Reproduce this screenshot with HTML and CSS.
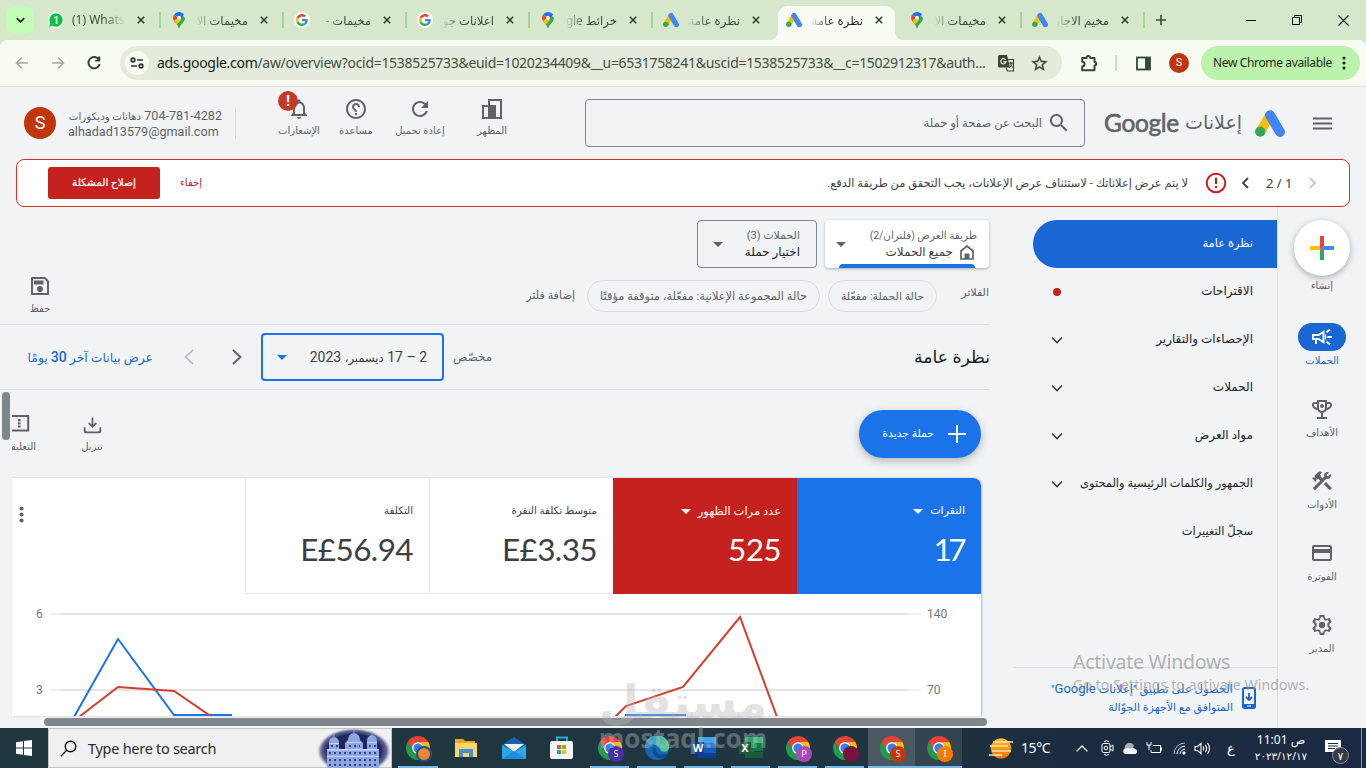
FILE: index.html
```html
<!DOCTYPE html>
<html lang="ar">
<head>
<meta charset="utf-8">
<title>نظرة عامة</title>
<link rel="stylesheet" href="styles.css">
</head>
<body>
<svg class="defs" width="0" height="0">
  <symbol id="chrome" viewBox="0 0 24 24">
    <path fill="#ea4335" d="M1.61 6A12 12 0 0 1 22.39 6H12A6 6 0 0 0 6.8 15Z"/>
    <path fill="#fbbc04" d="M12 6H22.39A12 12 0 0 1 12 24L17.2 15A6 6 0 0 0 12 6Z"/>
    <path fill="#1e9e4a" d="M1.61 6A12 12 0 0 0 12 24L17.2 15A6 6 0 0 1 6.8 15Z"/>
    <circle cx="12" cy="12" r="6" fill="#fff"/><circle cx="12" cy="12" r="4.6" fill="#3b7ded"/>
  </symbol>
  <symbol id="pin" viewBox="0 0 12 16">
    <path fill="#34a853" d="M1 9C2.500 11 5 13 5.500 16H6.500C7 12.500 12 10 12 6L9 3Z"/>
    <path fill="#fbbc04" d="M1 9L5 4L8 8L4 12.500Z"/>
    <path fill="#ea4335" d="M1.300 2.500L5 5.500L1 9C-.6 6.500 0 3.800 1.300 2.500Z"/>
    <path fill="#1a73e8" d="M1.300 2.500C2.400 1 4 0 6 0C8 0 10 1 11 2.800L6 8L4.200 4.800Z"/>
    <circle cx="6" cy="5.800" r="2" fill="#fff"/>
  </symbol>
  <symbol id="ads" viewBox="0 0 30 27">
    <path stroke="#fbbc04" stroke-width="9.500" d="M14.500 6L5.500 21.500"/>
    <path stroke="#4285f4" stroke-width="10" stroke-linecap="round" d="M15 5.200L25 22"/>
    <circle cx="5.200" cy="21.700" r="5.100" fill="#34a853"/>
  </symbol>
  <symbol id="goog" viewBox="0 0 48 48">
    <path fill="#EA4335" d="M24 9.500c3.540 0 6.710 1.220 9.210 3.600l6.850-6.850C35.900 2.380 30.470 0 24 0 14.620 0 6.510 5.380 2.560 13.220l7.980 6.190C12.430 13.720 17.740 9.500 24 9.500z"/>
    <path fill="#4285F4" d="M46.980 24.550c0-1.570-.15-3.090-.38-4.550H24v9.020h12.940c-.58 2.960-2.260 5.480-4.780 7.180l7.730 6c4.510-4.180 7.090-10.360 7.090-17.650z"/>
    <path fill="#FBBC05" d="M10.530 28.590c-.48-1.450-.76-2.990-.76-4.590s.27-3.140.76-4.590l-7.980-6.190C.92 16.460 0 20.120 0 24c0 3.880.92 7.540 2.560 10.780l7.970-6.190z"/>
    <path fill="#34A853" d="M24 48c6.480 0 11.930-2.130 15.890-5.810l-7.730-6c-2.150 1.450-4.920 2.300-8.160 2.300-6.260 0-11.570-4.220-13.470-9.910l-7.980 6.190C6.510 42.620 14.620 48 24 48z"/>
  </symbol>
  <symbol id="x" viewBox="0 0 8 8"><path d="M.8.8L7.200 7.200M7.200.8L.8 7.200" stroke="currentColor" stroke-width="1.500"/></symbol>
  <symbol id="chev" viewBox="0 0 12 8"><path d="M1 1.500L6 6.500L11 1.500" fill="none" stroke="currentColor" stroke-width="1.600"/></symbol>
</svg>

<header class="tabstrip">
  <div class="tab-search"><svg width="9" height="6" viewBox="0 0 12 8"><path d="M1 1.500L6 6.500L11 1.500" fill="none" stroke="#1f2a1c" stroke-width="2.400"/></svg></div>
  <div class="tab"><svg class="fav" width="16" height="16" viewBox="0 0 16 16"><circle cx="8" cy="8" r="8" fill="#fff"/><path d="M8 1.300A6.700 6.700 0 1 1 4.700 13.800L1.300 14.700L2.300 11.400A6.700 6.700 0 0 1 8 1.300Z" fill="#0bc144"/><text x="8" y="11.500" font-size="10" font-weight="700" text-anchor="middle" fill="#fff">1</text></svg><span class="tab-title ltr">(1) WhatsApp</span><svg class="close"><use href="#x"/></svg></div>
  <div class="tab"><svg class="fav"><use href="#pin"/></svg><span class="tab-title">مخيمات الاجار</span><svg class="close"><use href="#x"/></svg></div>
  <div class="tab"><span class="fav disc"><svg width="12" height="12"><use href="#goog"/></svg></span><span class="tab-title">مخيمات -</span><svg class="close"><use href="#x"/></svg></div>
  <div class="tab"><span class="fav disc"><svg width="12" height="12"><use href="#goog"/></svg></span><span class="tab-title">اعلانات جوجل</span><svg class="close"><use href="#x"/></svg></div>
  <div class="tab"><svg class="fav"><use href="#pin"/></svg><span class="tab-title">خرائط Google</span><svg class="close"><use href="#x"/></svg></div>
  <div class="tab bare"><svg class="fav"><use href="#ads"/></svg><span class="tab-title">نظرة عامة</span><svg class="close"><use href="#x"/></svg></div>
  <div class="tab active"><svg class="fav"><use href="#ads"/></svg><span class="tab-title">نظرة عامة</span><svg class="close"><use href="#x"/></svg></div>
  <div class="tab"><svg class="fav"><use href="#pin"/></svg><span class="tab-title">مخيمات الاجار</span><svg class="close"><use href="#x"/></svg></div>
  <div class="tab"><svg class="fav"><use href="#ads"/></svg><span class="tab-title">مخيم الاجاويد</span><svg class="close"><use href="#x"/></svg></div>
  <svg class="newtab" width="10" height="10" viewBox="0 0 10 10"><path d="M5 0V10M0 5H10" stroke="#3a4a36" stroke-width="1.600"/></svg>
  <div class="winbtns">
    <svg width="10" height="10"><path d="M0 5.500H10" stroke="#111"/></svg>
    <svg width="10" height="10"><path d="M.5 2.500H7.500V9.500H.5ZM2.500 2V.5H9.500V7.500H8" fill="none" stroke="#111"/></svg>
    <svg width="11" height="11"><path d="M.5.5L10.500 10.500M10.500.5L.5 10.500" stroke="#111" stroke-width="1.100"/></svg>
  </div>
</header>

<div class="toolbar">
  <svg class="nav-ico dim" viewBox="0 0 16 16"><path d="M14 8H2.500M8 2.500L2.500 8L8 13.500"/></svg>
  <svg class="nav-ico dim" viewBox="0 0 16 16"><path d="M2 8H13.500M8 2.500L13.500 8L8 13.500"/></svg>
  <svg class="nav-ico" viewBox="0 0 16 16"><path d="M13.200 5A5.700 5.700 0 1 0 13.700 9M13.300 1.500V5.600H9.200" stroke-width="1.900"/></svg>
  <div class="omnibox">
    <span class="site"><svg width="14" height="12" viewBox="0 0 14 12"><g fill="none" stroke="#2b3328" stroke-width="1.700"><circle cx="3" cy="3" r="1.800"/><path d="M7 3H13M1 9H7"/><circle cx="11" cy="9" r="1.800"/></g></svg></span>
    <span class="url"><b>ads.google.com</b>/aw/overview?ocid=1538525733&amp;euid=1020234409&amp;__u=6531758241&amp;uscid=1538525733&amp;__c=1502912317&amp;auth...</span>
    <svg class="translate" width="17" height="17" viewBox="0 0 17 17"><path d="M1.500 0H9L12 12.500H1.500A1.500 1.500 0 0 1 0 11V1.500A1.500 1.500 0 0 1 1.500 0Z" fill="#3b4838"/><path d="M10 4.500H15.500V16H9.500L8 12.500" fill="none" stroke="#3b4838" stroke-width="1.200"/><path d="M7.600 4.800A2.600 2.600 0 1 0 8 6.700H5.500" fill="none" stroke="#e4ebdc" stroke-width="1.200"/><path d="M10.500 8H15M12.500 7V8C12.800 10 14 12 15 12.500M14 8C14 10 12 12.500 11 13" fill="none" stroke="#3b4838"/></svg>
    <svg class="star" width="19" height="19" viewBox="0 0 24 24"><path fill="#3b4838" stroke="#3b4838" stroke-width=".4" d="M22 9.240l-7.190-.62L12 2 9.190 8.630 2 9.240l5.460 4.730L5.820 21 12 17.270 18.180 21l-1.630-7.030L22 9.240zM12 15.400l-3.760 2.270 1-4.280-3.320-2.880 4.380-.38L12 6.100l1.710 4.040 4.380.38-3.320 2.880 1 4.280L12 15.400z"/></svg>
  </div>
  <svg class="puzzle" width="17" height="17" viewBox="0 0 17 17"><path d="M1.200 3H5.500A1.800 1.800 0 0 1 9.300 3H13.500V7A1.700 1.700 0 0 1 13.500 10.500V15.200H1.200V11.500A2.400 2.400 0 0 0 1.200 6.700Z" fill="none" stroke="#2f4b32" stroke-width="2" stroke-linejoin="round"/></svg>
  <i class="tb-sep"></i>
  <svg class="panel" width="15" height="15" viewBox="0 0 15 15"><rect x="1" y="1.500" width="13" height="12" fill="none" stroke="#2f4b32" stroke-width="1.800"/><path d="M9 1H14V14H9Z" fill="#2f4b32"/></svg>
  <span class="mini-avatar">S</span>
  <div class="update"><span>New Chrome available</span><svg width="4" height="14"><g fill="#1d2b1a"><circle cx="2" cy="2" r="1.600"/><circle cx="2" cy="7" r="1.600"/><circle cx="2" cy="12" r="1.600"/></g></svg></div>
</div>

<div class="app-header">
  <span class="avatar">S</span>
  <div class="account"><span class="acc-id" dir="rtl">704-781-4282 <em>دهانات وديكورات</em></span><span class="mail">alhadad13579@gmail.com</span></div>
  <div class="tools">
    <div class="tool t1"><svg viewBox="0 0 24 24"><path d="M12 22c1.100 0 2-.9 2-2h-4c0 1.100.89 2 2 2zm6-6v-5c0-3.070-1.640-5.640-4.500-6.320V4c0-.83-.67-1.500-1.500-1.500s-1.500.67-1.500 1.500v.68C7.630 5.360 6 7.920 6 11v5l-2 2v1h16v-1l-2-2zm-2 1H8v-6c0-2.480 1.510-4.500 4-4.500s4 2.020 4 4.500v6z"/></svg><i class="alert">!</i><span>الإشعارات</span></div>
    <div class="tool t2"><svg class="flip" viewBox="0 0 24 24"><path d="M11 18h2v-2h-2v2zm1-16C6.480 2 2 6.480 2 12s4.480 10 10 10 10-4.480 10-10S17.520 2 12 2zm0 18c-4.410 0-8-3.590-8-8s3.590-8 8-8 8 3.590 8 8-3.590 8-8 8zm0-14c-2.210 0-4 1.790-4 4h2c0-1.100.9-2 2-2s2 .9 2 2c0 2-3 1.750-3 5h2c0-2.250 3-2.500 3-5 0-2.210-1.790-4-4-4z"/></svg><span>مساعدة</span></div>
    <div class="tool t3"><svg viewBox="0 0 24 24"><path d="M17.650 6.350C16.200 4.900 14.210 4 12 4c-4.420 0-7.990 3.580-7.990 8s3.570 8 7.990 8c3.730 0 6.840-2.550 7.730-6h-2.080c-.82 2.330-3.040 4-5.650 4-3.310 0-6-2.690-6-6s2.690-6 6-6c1.660 0 3.140.69 4.220 1.780L13 11h7V4l-2.350 2.350z"/></svg><span>إعادة تحميل</span></div>
    <div class="tool t4"><svg viewBox="0 0 24 24"><path d="M9 3H21V21H9ZM3 9H15V21H3Z" class="line"/><path d="M9 9H15V21H9Z"/></svg><span>المظهر</span></div>
  </div>
  <div class="search"><span>البحث عن صفحة أو حملة</span><svg width="24" height="24" viewBox="0 0 24 24"><path fill="#5f6368" d="M15.500 14h-.79l-.28-.27C15.410 12.590 16 11.110 16 9.500 16 5.910 13.090 3 9.500 3S3 5.910 3 9.500 5.910 16 9.500 16c1.610 0 3.090-.59 4.230-1.570l.27.28v.79l5 4.990L20.490 19l-4.990-5zm-6 0C7.010 14 5 11.990 5 9.500S7.010 5 9.500 5 14 7.010 14 9.500 11.990 14 9.500 14z"/></svg></div>
  <span class="google">Google</span><span class="brand-ar">إعلانات</span>
  <svg class="ads-logo" width="30" height="27"><use href="#ads"/></svg>
  <svg class="burger" width="19" height="13"><path d="M0 1.500H19M0 6.500H19M0 11.500H19" stroke="#5f6368" stroke-width="2"/></svg>
</div>

<div class="banner">
  <button class="fix">إصلاح المشكلة</button>
  <span class="hide">إخفاء</span>
  <span class="banner-text">لا يتم عرض إعلاناتك - لاستئناف عرض الإعلانات، يجب التحقق من طريقة الدفع.</span>
  <svg class="warn" width="22" height="22"><circle cx="11" cy="11" r="9.300" fill="none" stroke="#c5221f" stroke-width="2"/><path d="M11 5.500V12M11 14V16" stroke="#c5221f" stroke-width="2.200"/></svg>
  <svg class="bprev" width="8" height="12"><path d="M7 1L2 6L7 11" fill="none" stroke="#3c4043" stroke-width="1.800"/></svg>
  <span class="count">2 / 1</span>
  <svg class="bnext" width="8" height="12"><path d="M1 1L6 6L1 11" fill="none" stroke="#c5bcc3" stroke-width="1.600"/></svg>
</div>

<main class="main">
  <section class="content">
    <div class="scope">
      <div class="save"><svg viewBox="0 0 24 24"><path class="line" d="M4 4H16.800L20 7.200V20H4Z" stroke-linejoin="round"/><path d="M6 6.500H15.500V10.500H6Z"/><circle cx="12" cy="15" r="3"/></svg><span>حفظ</span></div>
      <div class="scope-right">
        <div class="pickers">
          <div class="picker camp"><i class="caret"></i><div class="ptext"><span class="p-top" dir="rtl">الحملات (3)</span><span class="p-main">اختيار حملة</span></div></div>
          <div class="picker view"><i class="caret"></i><div class="ptext"><span class="p-top">طريقة العرض (فلتران/2)</span><span class="p-main">جميع الحملات<svg width="14" height="15" viewBox="0 0 14 15"><path d="M1 14V6L7 1L13 6V14Z" fill="none" stroke="#5f6368" stroke-width="1.700"/><path d="M4.500 8.500H9.500V14H4.500Z" fill="#5f6368"/></svg></span></div><b class="under"></b></div>
        </div>
        <div class="filters"><span class="addf">إضافة فلتر</span><span class="chip c2">حالة المجموعة الإعلانية: مفعّلة، متوقفة مؤقتًا</span><span class="chip c1">حالة الحملة: مفعّلة</span><span class="flabel">الفلاتر</span></div>
      </div>
    </div>
    <div class="titlebar">
      <span class="show30" dir="rtl">عرض بيانات آخر <b>30</b> يومًا</span>
      <svg class="prev" width="10" height="16"><path d="M9 1L1.500 8L9 15" fill="none" stroke="#b5b8bc" stroke-width="1.700"/></svg>
      <svg class="next" width="10" height="16"><path d="M1 1L8.500 8L1 15" fill="none" stroke="#5f6368" stroke-width="1.900"/></svg>
      <div class="date"><i class="caret blue"></i><span dir="rtl">2 – 17 <em>ديسمبر،</em> 2023</span></div>
      <span class="custom">مخصّص</span>
      <h1>نظرة عامة</h1>
    </div>
    <div class="scroller">
      <i class="vbar"></i>
      <div class="actions">
        <div class="act feedback"><svg width="18" height="17"><path class="line" d="M0 1H16.200V15.500H0"/><path d="M6 4H8.500V6.500H6ZM6 7.500H8.500V9.500H6ZM6 10.500H8.500V12.500H6Z"/></svg><span>التعليقات</span></div>
        <div class="act download"><svg viewBox="0 0 24 24"><path d="M12 16l-5-5 1.400-1.450L11 12.150V4h2v8.150l2.600-2.600L17 11zM4 15v3a2 2 0 0 0 2 2h12a2 2 0 0 0 2-2v-3h2v4a3 3 0 0 1-3 3H5a3 3 0 0 1-3-3v-4z"/></svg><span>تنزيل</span></div>
        <button class="new"><span>حملة جديدة</span><svg width="18" height="18"><path d="M9 0V18M0 9H18" stroke="#fff" stroke-width="2"/></svg></button>
      </div>
      <div class="card">
        <div class="metrics">
          <div class="more"><svg width="5" height="17"><g fill="#5f6368"><circle cx="2.500" cy="2.500" r="2.100"/><circle cx="2.500" cy="8.500" r="2.100"/><circle cx="2.500" cy="14.500" r="2.100"/></g></svg></div>
          <div class="metric"><span class="m-label">التكلفة</span><span class="m-val">E£56.94</span></div>
          <div class="metric"><span class="m-label">متوسط تكلفة النقرة</span><span class="m-val">E£3.35</span></div>
          <div class="metric red"><span class="m-label"><i class="caret white"></i>عدد مرات الظهور</span><span class="m-val">525</span></div>
          <div class="metric bluem"><span class="m-label"><i class="caret white"></i>النقرات</span><span class="m-val tight">17</span></div>
        </div>
        <svg class="chart" width="969" height="122" viewBox="12 594 969 122">
          <g stroke="#e4e4e4" stroke-width="2"><path d="M61 614H909M61 690H909"/><path d="M49 614H61M909 614H921M49 690H61M909 690H921" stroke="#efefef"/></g>
          <g class="axis"><text x="36" y="618">6</text><text x="36" y="694">3</text><text x="927" y="618">140</text><text x="927" y="694">70</text></g>
          <g fill="none" stroke-width="2"><path stroke="#1a73e8" d="M74 717L118 639L174 715H232M625 715H686"/><path stroke="#d23f31" d="M79 717L118 687L174 691L212 717M615 717L626 706L683 687L740 617L777 717"/></g>
        </svg>
      </div>
      <i class="hbar"></i>
    </div>
  </section>
  <nav class="menu">
    <a class="on">نظرة عامة</a>
    <a><i class="dot"></i>الاقتراحات</a>
    <a><svg><use href="#chev"/></svg>الإحصاءات والتقارير</a>
    <a><svg><use href="#chev"/></svg>الحملات</a>
    <a><svg><use href="#chev"/></svg>مواد العرض</a>
    <a class="narrow"><svg><use href="#chev"/></svg>الجمهور والكلمات الرئيسية والمحتوى</a>
    <a class="narrow">سجلّ التغييرات</a>
    <div class="getapp"><p dir="rtl">الحصول على تطبيق "إعلانات <span>Google</span>"<br><em>المتوافق مع الأجهزة الجوّالة</em></p><svg width="14" height="22"><rect x="1" y="1" width="12" height="20" rx="1.500" fill="none" stroke="#1967d2" stroke-width="2"/><path d="M1 17H13V21H1Z" fill="#1967d2"/><path d="M5 19H9" stroke="#fff"/><path d="M7 6V13M4 10L7 13L10 10" fill="none" stroke="#1967d2" stroke-width="1.800"/></svg></div>
  </nav>
  <aside class="rail">
    <div class="fab"><svg width="24" height="24"><path fill="#ea4335" d="M10 0H14V10L10 14Z"/><path fill="#4285f4" d="M14 10H24V14H10Z"/><path fill="#34a853" d="M10 14H14V24H10Z"/><path fill="#fbbc04" d="M0 10H10V14H0Z"/></svg></div>
    <span class="fab-l">إنشاء</span>
    <div class="r on"><em><svg viewBox="0 0 24 24"><path class="line" d="M3 10V14H8.500L13.500 17.200V6.800L8.500 10ZM6 14V19M17.300 12H22M16.500 7.200L20 4.600M16.500 16.800L20 19.400"/><path d="M15 8.600C16.800 10.500 16.800 13.500 15 15.400Z"/></svg></em><span>الحملات</span></div>
    <div class="r"><em><svg viewBox="0 0 24 24"><path d="M19 5h-2V3H7v2H5c-1.100 0-3 .9-3 2v1c0 2.550 2.500 4.630 5.390 4.940.63 1.500 1.980 2.630 3.610 2.960V20H7v2h10v-2h-4v-4.100c1.630-.33 2.980-1.460 3.610-2.960C19.500 12.630 22 10.550 22 8V7c0-1.100-1.900-2-3-2zM4 8V7h3v3.820C5.500 10.400 4 9.300 4 8zm8 6c-1.650 0-3-1.350-3-3V5h6v6c0 1.650-1.350 3-3 3zm8-6c0 1.300-1.500 2.400-3 2.820V7h3v1z"/><circle cx="12" cy="9" r="2"/></svg></em><span>الأهداف</span></div>
    <div class="r"><em><svg viewBox="0 0 24 24"><path d="M13.783 15.172l2.121-2.121 5.996 5.996-2.121 2.121zM17.500 10c1.930 0 3.500-1.570 3.500-3.500 0-.58-.16-1.120-.41-1.600l-2.700 2.700-1.490-1.490 2.700-2.700c-.48-.25-1.020-.41-1.600-.41C15.570 3 14 4.570 14 6.500c0 .41.08.8.21 1.160l-1.850 1.850-1.780-1.780.71-.71-1.410-1.410L12 3.490a3 3 0 0 0-4.240 0L4.220 7.030l1.410 1.410H2.810L2.100 9.150l3.540 3.540.71-.71V9.150l1.410 1.410.71-.71 1.780 1.780-7.410 7.410 2.120 2.120L16.340 9.790c.36.13.75.21 1.160.21z"/></svg></em><span>الأدوات</span></div>
    <div class="r"><em><svg viewBox="0 0 24 24"><path d="M20 4H4c-1.110 0-1.990.89-1.990 2L2 18c0 1.110.89 2 2 2h16c1.110 0 2-.89 2-2V6c0-1.110-.89-2-2-2zm0 14H4v-6h16v6zm0-10H4V6h16v2z"/></svg></em><span>الفوترة</span></div>
    <div class="r"><em><svg viewBox="0 0 24 24"><path d="M19.430 12.980c.04-.32.07-.64.07-.98 0-.34-.03-.66-.07-.98l2.110-1.650c.19-.15.24-.42.12-.64l-2-3.460c-.12-.22-.39-.3-.61-.22l-2.490 1c-.52-.4-1.080-.73-1.690-.98l-.38-2.650C14.460 2.180 14.250 2 14 2h-4c-.25 0-.46.18-.49.42l-.38 2.650c-.61.25-1.170.59-1.690.98l-2.490-1c-.23-.09-.49 0-.61.22l-2 3.460c-.13.22-.07.49.12.64l2.110 1.650c-.04.32-.07.65-.07.98 0 .33.03.66.07.98l-2.110 1.650c-.19.15-.24.42-.12.64l2 3.460c.12.22.39.3.61.22l2.490-1c.52.4 1.080.73 1.690.98l.38 2.650c.03.24.24.42.49.42h4c.25 0 .46-.18.49-.42l.38-2.650c.61-.25 1.170-.59 1.690-.98l2.490 1c.23.09.49 0 .61-.22l2-3.460c.12-.22.07-.49-.12-.64l-2.110-1.650zM17.300 13.500l1.700 1.600-1 1.800-2.300-.7-2 1.200-.5 2.300h-2.400l-.5-2.300-2-1.200-2.300.7-1-1.800 1.700-1.600v-3L5 8.900l1-1.800 2.300.7 2-1.200.5-2.300h2.400l.5 2.300 2 1.200 2.300-.7 1 1.800-1.700 1.600Z" fill-rule="evenodd"/><circle cx="12" cy="12" r="3.200"/></svg></em><span>المدير</span></div>
  </aside>
</main>

<footer class="taskbar">
  <div class="start"><svg width="16" height="16"><path fill="#fff" d="M0 2.300L7 1.300V7.500H0ZM8 1.100L16 0V7.500H8ZM0 8.500H7V14.700L0 13.700ZM8 8.500H16V16L8 14.900Z"/></svg></div>
  <div class="tsearch"><svg width="17" height="17"><circle cx="10.500" cy="6.500" r="5.300" fill="none" stroke="#111" stroke-width="1.400"/><path d="M6.700 10.300L.8 16.200" stroke="#111" stroke-width="1.400"/></svg><span>Type here to search</span>
    <svg class="castle" width="74" height="39" viewBox="0 0 74 39"><defs><radialGradient id="night"><stop offset=".72" stop-color="#20265c"/><stop offset=".88" stop-color="#3b437c" stop-opacity=".8"/><stop offset="1" stop-color="#8088b0" stop-opacity="0"/></radialGradient></defs><ellipse cx="37" cy="22" rx="37" ry="23" fill="url(#night)"/><g fill="#8ea6e4"><path d="M10 20H62V39H10Z"/><path d="M12 20V13Q12 9 17 8Q22 9 22 13V20ZM28 20V14L31 11Q31 5 37 4Q43 5 43 11L46 14V20ZM50 20V12Q50 7 55 6Q60 7 60 12V20Z"/><path d="M36.500 0H37.500V6H36.500ZM16.500 4H17.500V9H16.500ZM54.500 2H55.500V7H54.500Z"/></g><g fill="#c9d5fa"><path d="M10 20H62V21.500H10ZM10 27H62V28H10ZM30 13H44V14H30ZM12 14H22V15H12ZM50 13H60V14H50Z"/></g><path stroke="#34407f" stroke-width="2" stroke-dasharray="2 3" d="M12 24H61M12 31H61M12 36H61M14 17H21M32 17H43M52 17H59"/></svg>
  </div>
  <div class="apps">
    <div class="app pinned run"><svg width="24" height="24"><use href="#chrome"/></svg><i class="who money"></i></div>
    <div class="app pinned"><svg width="22" height="18"><path fill="#f3a623" d="M0 0H8L10 2H20V6H0Z"/><path fill="#ffd56a" d="M0 4H22V18H0Z"/><path fill="#3b93d8" d="M4 18V10H18V18H14V14H8V18Z"/></svg></div>
    <div class="app pinned"><svg width="24" height="22"><path fill="#1563b0" d="M0 8L12 0L24 8V14H0Z"/><path fill="#f4f6f8" d="M2 7H22L12 15Z"/><path fill="#29a8ea" d="M0 8L12 15L24 8V22H0Z"/><path fill="#1c8fda" d="M0 22L12 14L24 22Z"/></svg></div>
    <div class="app pinned"><svg width="24" height="24"><path d="M7 5V1.500H17V5" fill="none" stroke="#29a9e1" stroke-width="2"/><rect y="5" width="23" height="18" rx="2" fill="#f4f4f4"/><path fill="#f25022" d="M7 9H11V13H7Z"/><path fill="#7fba00" d="M12 9H16V13H12Z"/><path fill="#00a4ef" d="M7 14H11V18H7Z"/><path fill="#ffb900" d="M12 14H16V18H12Z"/></svg></div>
    <div class="app run"><svg width="24" height="24"><use href="#chrome"/></svg><i class="who violet">S</i></div>
    <div class="app run"><svg width="24" height="24"><defs><linearGradient id="edge"><stop stop-color="#2b8de3"/><stop offset="1" stop-color="#5bd48b"/></linearGradient></defs><circle cx="12" cy="12" r="12" fill="#1565b5"/><path fill="url(#edge)" d="M0 11A12 12 0 0 1 24 11C24 17 15 17 15 13C15 9 5 6 0 11Z"/><path fill="#0f4a8f" d="M8 12C6 18 11 24 18 22C22 20 22 18 21 18C14 20 10 17 11 12Z"/></svg></div>
    <div class="app run"><svg width="24" height="22"><path fill="#41a5ee" d="M6 0H24V6H6Z"/><path fill="#2b7cd3" d="M6 6H24V11H6Z"/><path fill="#185abd" d="M6 11H24V16H6Z"/><path fill="#103f91" d="M6 16H24V21H6ZM0 5H12V17H0Z"/><text x="6" y="15" class="glyph">W</text></svg></div>
    <div class="app run"><svg width="24" height="22"><path fill="#21a366" d="M6 0H15V11H6Z"/><path fill="#33c481" d="M15 0H24V6H15Z"/><path fill="#107c41" d="M15 6H24V14H15ZM6 11H15V15H6Z"/><path fill="#185c37" d="M6 15H24V21H6ZM0 5H12V17H0Z"/><text x="6" y="15" class="glyph">X</text></svg></div>
    <div class="app run"><svg width="24" height="24"><use href="#chrome"/></svg><i class="who pink">P</i></div>
    <div class="app run"><svg width="24" height="24"><use href="#chrome"/></svg><i class="who wine"></i></div>
    <div class="app run lit"><svg width="24" height="24"><use href="#chrome"/></svg><i class="who brick">S</i></div>
    <div class="app run lit2"><svg width="24" height="24"><use href="#chrome"/></svg><i class="who orange">I</i></div>
  </div>
  <div class="tray">
    <svg class="sun" width="24" height="21"><defs><linearGradient id="sg" x2="0" y2="1"><stop stop-color="#fdc010"/><stop offset="1" stop-color="#f0700c"/></linearGradient></defs><circle cx="12" cy="10.500" r="10.300" fill="url(#sg)"/><path d="M4 4H24M1 8H19M3 13H22M0 17H13" stroke="#f5e3b5" stroke-width="1.500"/></svg>
    <span class="temp">15°C</span>
    <svg class="up" width="12" height="7"><path d="M.6 6.400L6 1L11.400 6.400" fill="none" stroke="#fff" stroke-width="1.300"/></svg>
    <svg class="cam" width="13" height="16" fill="none" stroke="#fff"><path d="M3 1.500Q5.500 .2 8 1.500M3 14.500Q5.500 15.800 8 14.500"/><rect x="1" y="3.500" width="8" height="9" rx="1.500"/><circle cx="5" cy="8" r="1.800"/><path d="M9 7L12 5V11L9 9"/></svg>
    <svg class="cloud" width="16" height="11"><path fill="#a9aeb5" d="M3 6A4.500 4.500 0 0 1 12 3L8 8Z"/><path fill="#f4f5f6" d="M3 11A3 3 0 0 1 3 5.500Q6 4 8 6Q11 3 13 6A2.600 2.600 0 0 1 13.500 11Z"/></svg>
    <svg class="batt" width="16" height="12" fill="none" stroke="#fff"><path d="M7 3.500H14.500V10.500H5V8M15.500 5.500V8.500M1 0V3H5V0M3 3V8"/></svg>
    <svg class="wifi" width="13" height="13" fill="none" stroke="#fff"><path d="M1 12A11 11 0 0 1 12 1" stroke-opacity=".7"/><path d="M4 12A8 8 0 0 1 12 4.200M7 12A5 5 0 0 1 12 7.200"/><circle cx="11" cy="11" r="1.200" fill="#fff"/></svg>
    <svg class="vol" width="17" height="13" fill="none" stroke="#fff" stroke-width="1.100"><path d="M1 4.500H3.500L7 1.500V11.500L3.500 8.500H1ZM9 4.500Q10.500 6.500 9 8.500M11.200 2.800Q14 6.500 11.200 10.200M13.500 1Q17.500 6.500 13.500 12"/></svg>
    <span class="lang">ع</span>
    <div class="clock"><span dir="rtl">ص 11:01</span><span class="day" dir="ltr">٢٠٢٣/١٢/١٧</span></div>
    <div class="note"><svg width="17" height="16"><path fill="#fff" d="M0 0H16V12H13L9 16V12H0Z"/><path d="M3 3.500H13M3 6H13M3 8.500H10" stroke="#1c2b40"/></svg><i>٧</i></div>
    <i class="peek"></i>
  </div>
</footer>

<div class="activate"><strong>Activate Windows</strong><span>Go to Settings to activate Windows.</span></div>
<div class="mostaql"><strong>مستقل</strong><span>mostaql.com</span></div>
</body>
</html>
```
FILE: styles.css
```css
* { box-sizing: border-box; }
html, body { margin: 0; width: 1366px; height: 768px; overflow: hidden; }
body { position: relative; display: flex; flex-direction: column; background: #f1f3f4; color: #3c4043; font: 12px/16px Roboto, "DejaVu Sans", sans-serif; white-space: nowrap; }
svg { flex: none; display: block; fill: none; }
i, em { font-style: normal; }
.defs { position: absolute; }
.flip { transform: scaleX(-1); }
.line { fill: none; stroke: #5f6368; stroke-width: 2; }
button { border: 0; padding: 0; font: inherit; color: inherit; }

/* tab strip */
.tabstrip { height: 40px; flex: none; display: flex; align-items: center; background: #d7e7cc; }
.tab-search { width: 28px; height: 28px; margin: 0 3px 0 6px; border-radius: 9px; background: #c4fdb7; display: grid; place-items: center; }
.tab { position: relative; width: 123px; height: 40px; flex: none; display: flex; align-items: center; padding-left: 11px; color: #3c4a38; }
.tab:not(.bare):not(.active)::after { content: ""; position: absolute; right: -1px; top: 12px; width: 2px; height: 16px; background: #9fd896; }
.fav { width: 16px; height: 16px; margin-right: 8px; flex: none; }
.disc { display: grid; place-items: center; background: #fff; border-radius: 50%; }
.tab-title { width: 53px; overflow: hidden; direction: rtl; text-align: right; font: 11.7px/18px "Noto Sans", "DejaVu Sans", sans-serif; -webkit-mask: linear-gradient(to left, #000 60%, transparent 100%); mask: linear-gradient(to left, #000 60%, transparent 100%); }
.tab-title.ltr { direction: ltr; text-align: left; font-size: 12px; -webkit-mask: linear-gradient(to right, #000 60%, transparent 100%); mask: linear-gradient(to right, #000 60%, transparent 100%); }
.close { width: 8px; height: 8px; margin-left: 12px; color: #2c3a29; }
.tab.active { color: #1b2119; }
.tab.active > * { z-index: 1; }
.tab.active::before { content: ""; position: absolute; left: 3px; right: 3px; top: 6px; bottom: 0; border-radius: 9px 9px 0 0; background: #f8fbf1; }
.tab.active::after { content: ""; position: absolute; left: -6px; right: -6px; bottom: 0; height: 9px; background: radial-gradient(circle at 0 0, transparent 9px, #f8fbf1 9.500px) left / 9px 9px no-repeat, radial-gradient(circle at 100% 0, transparent 9px, #f8fbf1 9.500px) right / 9px 9px no-repeat; }
.newtab { margin-left: 12px; }
.winbtns { margin-left: 80px; display: flex; align-items: center; gap: 36px; }

/* toolbar */
.toolbar { height: 47px; flex: none; display: flex; align-items: center; padding-left: 14px; background: radial-gradient(circle at 8px 8px, transparent 8px, #d7e7cc 8.500px) left top / 8px 8px no-repeat, radial-gradient(circle at 0 8px, transparent 8px, #d7e7cc 8.500px) right top / 8px 8px no-repeat, #f8fbf1; border-bottom: 1px solid #dfe5d6; }
.nav-ico { width: 16px; height: 16px; margin-right: 20px; stroke: #2b4429; stroke-width: 1.5; }
.nav-ico.dim { stroke: #a3a89d; }
.omnibox { width: 942px; height: 34px; margin-left: -2px; border-radius: 17px; background: #e4ebdc; display: flex; align-items: center; padding-left: 5px; }
.site { width: 24px; height: 24px; border-radius: 50%; background: #f8fbf1; display: grid; place-items: center; }
.url { width: 832px; margin-left: 8px; font: 14px/20px "Noto Sans", sans-serif; letter-spacing: -.3px; color: #43503f; }
.url b { font-weight: 400; color: #12180f; }
.translate { margin-left: 9px; }
.star { margin-left: 15px; }
.puzzle { margin-left: 19px; }
.tb-sep { width: 2px; height: 16px; margin-left: 17px; background: #b7efac; }
.panel { margin-left: 19px; }
.mini-avatar { width: 20px; height: 20px; margin-left: 18px; border-radius: 50%; background: #bf360c; color: #fff; font-size: 11px; line-height: 20px; text-align: center; }
.update { width: 159px; height: 34px; margin-left: 12px; padding-left: 12px; display: flex; align-items: center; gap: 10px; background: #bbf2ac; border-radius: 17px; color: #1d2b1a; font: 12px/16px "Noto Sans", sans-serif; letter-spacing: -.36px; }
.update span { width: 119px; }

/* app header */
.app-header { height: 72px; flex: none; display: flex; align-items: center; padding-left: 24px; }
.avatar { width: 32px; height: 32px; border-radius: 50%; background: #bf360c; color: #fff; font-size: 18px; line-height: 32px; text-align: center; }
.account { width: 168px; height: 31px; margin-left: 12px; display: flex; flex-direction: column; border-right: 1px solid #dadce0; font-size: 13px; line-height: 16px; color: #5f6368; }
.account em { font-size: 10.3px; }
.acc-id { width: 154px; font-size: 12.6px; line-height: 15px; }
.mail { font-size: 12.6px; line-height: 15px; }
.tools { display: flex; align-self: flex-start; margin-top: 10px; color: #5f6368; font-size: 10px; }
.tool { position: relative; display: flex; flex-direction: column; align-items: center; width: 60px; }
.tool svg { width: 24px; height: 24px; fill: #5f6368; }
.tool span { margin-top: 3px; line-height: 14px; }
.t1 { margin-left: 33px; }
.t2 { margin-left: -3px; }
.t3 { margin-left: 4px; }
.t4 { margin-left: 12px; }
.alert { position: absolute; left: 9px; top: -6px; width: 20px; height: 20px; border-radius: 50%; background: #c53929; color: #fff; font-weight: 700; font-size: 15px; line-height: 20px; text-align: center; }
.search { width: 500px; height: 48px; margin-left: 63px; border: 1px solid #80868b; border-radius: 4px; display: flex; align-items: center; justify-content: flex-end; gap: 5px; padding-right: 13px; font-size: 11.6px; color: #5f6368; }
.google { width: 75px; margin: -1px 0 0 19px; font: 400 24.500px/30px Lato, sans-serif; letter-spacing: -.35px; color: #5f6368; -webkit-text-stroke: .6px #5f6368; }
.brand-ar { width: 57px; margin-left: 6px; font-size: 19px; line-height: 28px; color: #5f6368; direction: rtl; }
.ads-logo { margin-left: 13px; }
.burger { margin-left: 28px; }

/* banner */
.banner { width: 1334px; height: 48px; flex: none; margin: 0 16px; display: flex; align-items: center; background: #fff; border: 1px solid #d93025; border-radius: 8px; padding-left: 31px; }
.fix { width: 112px; height: 32px; border-radius: 3px; background: #c5221f; color: #fff; font-size: 10.5px; -webkit-text-stroke: .2px #fff; }
.hide { margin-left: 20px; font-size: 10.2px; color: #b3261e; width: 22px; }
.banner-text { width: 362px; margin-left: 624px; direction: rtl; font-size: 11.42px; }
.warn { margin-left: 17px; }
.bprev { margin-left: 14px; }
.count { margin-left: 17px; width: 26px; font: 13px/16px "Noto Sans", sans-serif; }
.bnext { margin-left: 17px; }

/* main */
.main { height: 521px; flex: none; display: flex; }
.content { width: 1013px; display: flex; flex-direction: column; }
.scope { width: 989px; height: 118px; display: flex; justify-content: space-between; border-bottom: 1px solid #dadce0; }
.save { width: 60px; margin: 67px 0 0 10px; display: flex; flex-direction: column; align-items: center; font-size: 10px; color: #5f6368; }
.save svg { width: 24px; height: 24px; fill: #5f6368; }
.save span { margin-top: 3px; }
.scope-right { display: flex; flex-direction: column; align-items: flex-end; }
.pickers { display: flex; gap: 8px; margin-top: 13px; }
.picker { position: relative; height: 48px; display: flex; align-items: center; justify-content: space-between; }
.camp { width: 120px; border: 1px solid #80868b; border-radius: 4px; padding: 0 16px 0 15px; }
.view { width: 164px; background: #fff; border-radius: 4px; box-shadow: 0 1px 3px rgba(60,64,67,.4); padding: 0 12px 0 11px; }
.caret { width: 0; height: 0; border: 5px solid transparent; border-bottom: 0; border-top-color: #5f6368; flex: none; }
.caret.blue { border-top-color: #1a73e8; }
.caret.white { border-top-color: #fff; }
.ptext { display: flex; flex-direction: column; align-items: flex-end; line-height: 17px; }
.p-top { direction: rtl; font-size: 10.4px; color: #5f6368; }
.camp .p-top { font-size: 11px; }
.camp .p-main { color: #202124; }
.p-main { display: flex; align-items: center; gap: 7px; }
.view .p-main { padding-right: 3px; }
.under { position: absolute; left: 14px; right: 14px; bottom: 0; height: 4px; border-radius: 4px 4px 0 0; background: #1a73e8; }
.filters { display: flex; align-items: center; margin-top: 12px; font-size: 11.2px; color: #5f6368; }
.chip { height: 32px; line-height: 31px; border: 1px solid #dadce0; border-radius: 16px; text-align: center; direction: rtl; }
.c2 { width: 233px; margin: 0 8px 0 12px; font-size: 11.4px; }
.c1 { width: 109px; font-size: 11px; }
.flabel { width: 52px; text-align: right; margin-bottom: 6px; font-size: 11px; }
.titlebar { width: 989px; height: 65px; display: flex; align-items: center; border-bottom: 1px solid #dadce0; padding-left: 27px; }
.show30 { width: 126px; color: #1967d2; font-size: 12.4px; }
.show30 b { font-weight: 500; font-size: 14px; }
.prev { margin-left: 31px; }
.next { margin-left: 38px; }
.date { width: 183px; height: 48px; margin-left: 19px; border: 2px solid #1a73e8; border-radius: 4px; display: flex; align-items: center; justify-content: space-between; padding: 0 15px 0 14px; font-size: 14px; }
.date em { font-size: 11.600px; }
.custom { margin-left: 9px; color: #5f6368; }
h1 { margin: 0 -1px 0 auto; font-size: 17.3px; font-weight: 400; line-height: 26px; color: #202124; }
.scroller { position: relative; flex: 1; display: flex; flex-direction: column; }
.vbar { position: absolute; left: 2px; top: 2px; width: 8px; height: 48px; border-radius: 4px; background: #80868b; }
.actions { height: 88px; margin-left: 12px; width: 969px; display: flex; align-items: flex-start; color: #5f6368; font-size: 10px; }
.act { display: flex; flex-direction: column; }
.act svg { fill: #5f6368; }
.feedback { width: 24px; margin-top: 25px; overflow: hidden; align-items: flex-end; }
.feedback svg { margin-right: 6px; }
.feedback span { margin-top: 7px; direction: rtl; }
.download { width: 50px; margin: 24px 0 0 31px; align-items: center; }
.download svg { width: 21px; height: 21px; }
.download span { margin-top: 4px; }
.new { width: 122px; height: 48px; margin: 20px 0 0 auto; border-radius: 24px; background: #1a73e8; color: #fff; display: flex; align-items: center; justify-content: flex-end; gap: 14px; padding-right: 15px; font-weight: 500; font-size: 10.800px; box-shadow: 0 3px 8px rgba(60,64,67,.35); }
.card { width: 969px; height: 238px; margin-left: 12px; background: #fff; border-radius: 0 8px 0 0; box-shadow: 1px 0 2px rgba(60,64,67,.3); overflow: hidden; }
.metrics { height: 116px; display: flex; }
.more { width: 233px; padding: 28px 0 0 7px; }
.metric { width: 184px; border-left: 1px solid #e4e6e8; border-bottom: 1px solid #e4e6e8; padding: 25px 16px 0 0; display: flex; flex-direction: column; align-items: flex-end; color: #3c4043; }
.m-label { display: flex; align-items: center; gap: 7px; font-size: 10.3px; }
.m-val { margin-top: 10px; font: 31.500px/40px Lato, sans-serif; letter-spacing: -.6px; }
.m-val.tight { letter-spacing: -3.500px; padding-right: 3px; margin-right: -1px; }
.metric.red { background: #c5221f; border-color: #c5221f; color: #fff; }
.metric.bluem { background: #1a73e8; border-color: #1a73e8; color: #fff; }
.red .m-label { font-size: 11.5px; }
.bluem .m-label { font-size: 11px; }
.axis { font-size: 12px; fill: #757575; }
.hbar { width: 943px; height: 8px; margin: 2px 0 0 44px; border-radius: 4px; background: #80868b; }

/* side menu */
.menu { width: 264px; display: flex; flex-direction: column; padding-top: 13px; color: #202124; }
.menu a { height: 48px; display: flex; align-items: center; justify-content: space-between; padding: 0 24px 2px 38px; }
.menu a svg { width: 12px; height: 8px; margin-top: 2px; color: #3c4043; }
.menu a:not(:has(svg, i)) { justify-content: flex-end; }
.menu a.on { margin-left: 20px; background: #1967d2; color: #fff; border-radius: 24px 0 0 24px; font-size: 11.500px; }
.menu a.narrow { font-size: 11.450px; }
.dot { width: 8px; height: 8px; margin: 2px 0 0 2px; border-radius: 50%; background: #c5221f; }
.getapp { margin-top: auto; height: 61px; border-top: 1px solid #dadce0; display: flex; align-items: center; justify-content: flex-end; gap: 9px; padding-right: 21px; color: #1967d2; }
.getapp p { margin: 0; line-height: 18px; font-size: 11.5px; }
.getapp em { font-size: 11.100px; }
.getapp p span { font-size: 13px; }

/* rail */
.rail { width: 89px; border-left: 1px solid #dadce0; display: flex; flex-direction: column; align-items: center; padding-top: 13px; font-size: 10px; color: #5f6368; }
.fab { width: 56px; height: 56px; flex: none; border-radius: 50%; background: #fff; box-shadow: 0 2px 6px rgba(60,64,67,.4); display: grid; place-items: center; }
.fab-l { margin: 2px 0 25px; }
.r { height: 72px; flex: none; display: flex; flex-direction: column; align-items: center; gap: 2px; padding-top: 4px; }
.r em { width: 48px; height: 28px; border-radius: 14px; display: grid; place-items: center; }
.r svg { width: 24px; height: 24px; fill: #5f6368; }
.r.on { color: #1967d2; }
.r.on em { background: #1967d2; }
.r.on svg { fill: #fff; }
.r.on .line { stroke: #fff; }

/* taskbar */
.taskbar { height: 40px; flex: none; display: flex; background: linear-gradient(90deg, #203840, #1f3540 62%, #1b2b40 80%, #1b2a42); color: #fff; font-family: "Noto Sans", "DejaVu Sans", sans-serif; }
.start { width: 48px; display: grid; place-items: center; }
.tsearch { width: 344px; background: #f0f0f0; border: 1px solid #c4c4c4; display: flex; align-items: center; padding-left: 11px; color: #2b2b2b; font-size: 14.500px; }
.tsearch span { margin-left: 11px; width: 200px; letter-spacing: -.28px; }
.castle { margin-left: 30px; }
.apps { display: flex; width: 578px; padding-left: 2px; }
.app { position: relative; width: 47px; height: 40px; flex: none; display: grid; place-items: center; }
.app.pinned { width: 48px; }
.app.run::after { content: ""; position: absolute; left: 4px; right: 4px; bottom: 0; height: 2px; background: #76b9ed; }
.app.lit { background: #4a5864; }
.app.lit2 { background: #344451; }
.app.lit::after, .app.lit2::after { left: 0; right: 0; }
.who { position: absolute; left: 22px; top: 18px; width: 16px; height: 16px; border-radius: 50%; font-size: 9px; line-height: 16px; text-align: center; }
.money { background: #e8872b; border: 2px solid #20508c; }
.violet { background: #4b2fa8; }
.pink { background: #ab47bc; }
.wine { background: #77123f; }
.brick { background: #c0390d; }
.orange { background: #f57c00; }
.glyph { font-size: 11px; font-weight: 700; text-anchor: middle; fill: #fff; }
.tray { flex: 1; display: flex; align-items: center; padding-left: 19px; }
.temp { margin-left: 8px; width: 30px; font-size: 14px; letter-spacing: -.4px; }
.up { margin-left: 25px; }
.cam { margin-left: 13px; }
.cloud { margin-left: 8px; }
.batt { margin-left: 8px; }
.wifi { margin-left: 11px; }
.vol { margin-left: 8px; }
.lang { margin-left: 16px; font-size: 13px; }
.clock { width: 56px; margin-left: auto; display: flex; flex-direction: column; align-items: center; font-size: 12px; line-height: 17px; letter-spacing: -.4px; }
.day { font-size: 10.400px; }
.note { position: relative; margin-left: 16px; }
.note i { position: absolute; left: 7px; top: 7px; width: 17px; height: 17px; border-radius: 50%; background: #333c44; border: 1px solid #8a9096; font-size: 11px; line-height: 15px; text-align: center; }
.peek { width: 1px; height: 40px; background: #8c95a0; margin: 0 4px 0 19px; }

/* overlays */
.activate { position: absolute; left: 1073px; top: 649px; display: flex; flex-direction: column; color: rgba(140,140,140,.65); font: 14px/20px "Noto Sans", sans-serif; letter-spacing: .12px; }
.activate strong { font-size: 19.5px; line-height: 26px; font-weight: 400; letter-spacing: -.25px; }
.mostaql { position: absolute; left: 598px; top: 670px; width: 170px; height: 82px; display: flex; flex-direction: column; align-items: center; color: rgba(185,185,185,.42); font-weight: 700; }
.mostaql strong { font: 700 46px/64px "DejaVu Sans", sans-serif; }
.mostaql span { margin-top: -8px; font: 700 26px/24px "Open Sans", sans-serif; }
```
